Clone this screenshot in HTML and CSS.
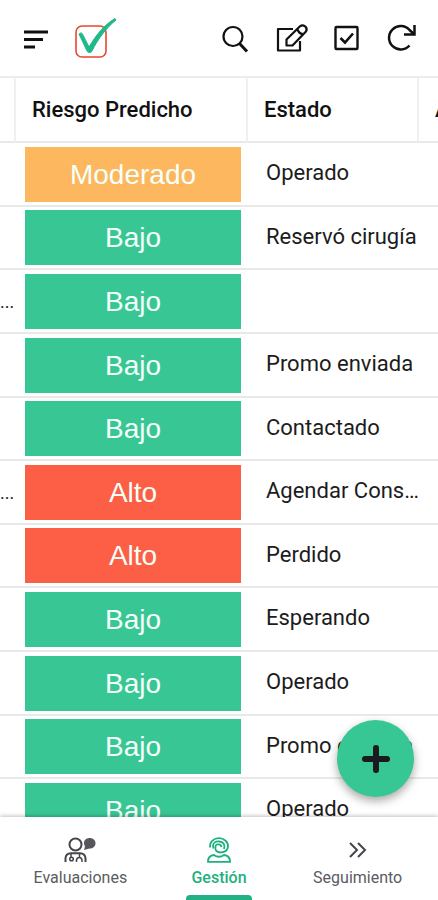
FILE: index.html
```html
<!DOCTYPE html>
<html lang="es">
  <head>
    <meta charset="UTF-8" />
    <meta name="viewport" content="width=device-width, initial-scale=1.0" />
    <title>Gestión</title>
    <link rel="stylesheet" href="styles.css">
  </head>
  <body>
    <header class="topbar">
      <button class="icon-button" aria-label="Menú">
        <svg viewBox="0 0 28 28" fill="none" stroke="#111" stroke-width="3">
          <path d="M2 8H26M2 15.500H21M2 23H13" />
        </svg>
      </button>
      <svg class="logo" viewBox="0 0 44 42" fill="none">
        <rect x="2" y="9" width="30" height="31" rx="6" stroke="#e5482f" stroke-width="1.600" />
        <path d="M5 17C7 15 8 16 9 18L15 30C22 18 30 8 41 1.500L42 3C32 11 24 22 18 34C17 36 14 36 13 34Z" fill="#1fb98a" stroke="#1fb98a" />
      </svg>
      <div class="actions">
        <button class="icon-button" aria-label="Buscar">
          <svg viewBox="0 0 28 28" fill="none" stroke="#111" stroke-width="2.200">
            <circle cx="12" cy="12.500" r="9.500" />
            <path d="M18.500 19.500L26 27.500" stroke-width="3" />
          </svg>
        </button>
        <button class="icon-button" aria-label="Editar">
          <svg viewBox="0 0 28 28" fill="none" stroke="#111" stroke-width="2.200" stroke-linejoin="round">
            <path d="M16 5H1V26.500H23V17" />
            <path d="M9.500 21.500V15.500L23 2.300Q25.500 .3 28 2.300L28.700 3Q30.600 5.500 28.700 7.800L15.500 21.500Z" />
            <path d="M20.500 5.500Q22 9.500 25.800 10.200" />
          </svg>
        </button>
        <button class="icon-button" aria-label="Seleccionar">
          <svg viewBox="0 0 28 28" fill="none" stroke="#111" stroke-width="2.400">
            <rect x="2.500" y="3" width="22" height="22" rx="1" />
            <path d="M7.500 14L12 18.500L20 9.500" stroke-width="2.600" />
          </svg>
        </button>
        <button class="icon-button" aria-label="Actualizar">
          <svg viewBox="0 0 28 28" fill="none" stroke="#111" stroke-width="2.500">
            <path d="M20.500 21.500A11.700 11.700 0 1 1 20.500 6L25 10" />
            <path d="M25.500 1V10.500H15" />
          </svg>
        </button>
      </div>
    </header>

    <main class="content">
      <table class="grid">
        <colgroup>
          <col class="col-name">
          <col class="col-risk">
          <col class="col-status">
          <col>
        </colgroup>
        <thead>
          <tr>
            <th></th>
            <th>Riesgo Predicho</th>
            <th>Estado</th>
            <th>A</th>
          </tr>
        </thead>
        <tbody>
          <tr><td></td><td><span class="tag medium">Moderado</span></td><td>Operado</td><td></td></tr>
          <tr><td></td><td><span class="tag low">Bajo</span></td><td>Reservó cirugía</td><td></td></tr>
          <tr><td>...</td><td><span class="tag low">Bajo</span></td><td></td><td></td></tr>
          <tr><td></td><td><span class="tag low">Bajo</span></td><td>Promo enviada</td><td></td></tr>
          <tr><td></td><td><span class="tag low">Bajo</span></td><td>Contactado</td><td></td></tr>
          <tr><td>...</td><td><span class="tag high">Alto</span></td><td>Agendar Consulta</td><td></td></tr>
          <tr><td></td><td><span class="tag high">Alto</span></td><td>Perdido</td><td></td></tr>
          <tr><td></td><td><span class="tag low">Bajo</span></td><td>Esperando</td><td></td></tr>
          <tr><td></td><td><span class="tag low">Bajo</span></td><td>Operado</td><td></td></tr>
          <tr><td></td><td><span class="tag low">Bajo</span></td><td>Promo enviada</td><td></td></tr>
          <tr><td></td><td><span class="tag low">Bajo</span></td><td>Operado</td><td></td></tr>
        </tbody>
      </table>
    </main>

    <button class="fab" aria-label="Agregar">
      <svg viewBox="0 0 28 28" stroke="#1a1a1f" stroke-width="6" stroke-linecap="round">
        <path d="M14 3V25M3 14H25" />
      </svg>
    </button>

    <nav class="tabs">
      <a class="tab" href="#evaluaciones">
        <svg viewBox="0 0 32 26" fill="none" stroke="#44464b" stroke-width="2">
          <circle cx="11.500" cy="7.500" r="6" />
          <path d="M1.500 25V21Q2 16.500 7 16.200H16Q21 16.500 21.500 21V25" />
          <path d="M7 17V20M15.500 17V20M12.500 25V23Q13 20.500 15.300 20.500Q17.500 20.500 18 23V25" stroke-width="1.500" />
          <circle cx="7.500" cy="22" r="1.800" stroke-width="1.500" />
          <path d="M25.500 1C29 1 31.500 3.200 31.500 6.200C31.500 9.300 29 11.500 25.500 11.500L20 13L21 9.500C18.500 5 21 1 25.500 1Z" fill="#55575c" stroke="none" />
        </svg>
        <span>Evaluaciones</span>
      </a>
      <a class="tab active" href="#gestion">
        <svg viewBox="0 0 32 26" fill="none" stroke="#1fb07f" stroke-width="1.800">
          <path d="M7 10.500C6.500 4.500 11 1.200 16 1.200S25.500 5 25 10Q24 15.500 17 15.500" />
          <path d="M10.500 11.500C8.500 5 14 4 16.500 4.500C20.500 5 22.500 8 21 12" />
          <path d="M12.500 9C13.500 6.500 18 7 18.500 10M12.500 9Q11.500 15 17 15.500" />
          <path d="M11 18Q5 18.500 5 24.800H27Q27 18.500 21 18Q16 21.500 11 18Z" />
        </svg>
        <span>Gestión</span>
      </a>
      <a class="tab" href="#seguimiento">
        <svg viewBox="0 0 32 26" fill="none" stroke="#44464b" stroke-width="2">
          <path d="M8 6L15 13L8 20M16 6L23 13L16 20" />
        </svg>
        <span>Seguimiento</span>
      </a>
    </nav>
  </body>
</html>
```

FILE: styles.css
```css
* {
  box-sizing: border-box;
}

body {
  margin: 0;
  height: 100vh;
  display: flex;
  flex-direction: column;
  overflow: hidden;
  background-color: #fff;
  color: #1c1c1c;
  font-family: Roboto, "Liberation Sans", sans-serif;
}

button {
  padding: 0;
  border: none;
  background: none;
  cursor: pointer;
}

svg {
  display: block;
  overflow: visible;
}

.topbar {
  display: flex;
  align-items: center;
  flex: none;
  height: 78px;
  padding: 0 21px 0 22px;
  border-bottom: 2px solid #ececec;
}

.icon-button svg {
  width: 28px;
  height: 28px;
}

.logo {
  width: 44px;
  height: 42px;
  margin-left: 24px;
}

.actions {
  display: flex;
  gap: 28px;
  margin-left: auto;
}

.content {
  flex: 1;
  min-height: 0;
  overflow: hidden;
}

.grid {
  width: 100%;
  table-layout: fixed;
  border-collapse: separate;
  border-spacing: 0;
}

.col-name {
  width: 16px;
}

.col-risk {
  width: 232px;
}

.col-status {
  width: 171px;
}

.grid th,
.grid td {
  overflow: hidden;
  white-space: nowrap;
  text-align: left;
  text-overflow: ellipsis;
  border-bottom: 2px solid #e8eaea;
}

.grid th {
  height: 65px;
  padding: 0 0 0 16px;
  border-right: 2px solid #f0f0f0;
  color: #111;
  font-size: 22px;
  font-weight: 500;
  text-overflow: clip;
}

.grid th:last-child {
  border-right: none;
}

.grid td {
  height: 64px;
  padding: 0 0 3px 18px;
  font-size: 22px;
}

/* keeps the row rhythm slightly under 64px */
.grid tr:nth-child(5n + 2) td,
.grid tr:nth-child(5n) td {
  height: 63px;
}

.grid th:first-child,
.grid td:first-child {
  padding: 0;
  text-overflow: clip;
}

.grid td:first-child {
  font-size: 18px;
}

.grid td:nth-child(2) {
  padding: 0 7px 0 9px;
}

.tag {
  display: block;
  height: 55px;
  line-height: 55px;
  color: #f4fffa;
  font-family: "Liberation Sans", Arial, sans-serif;
  font-size: 28px;
  text-align: center;
}

.low {
  background-color: #39c695;
}

.medium {
  background-color: #fdb75f;
}

.high {
  background-color: #fc5f45;
}

.fab {
  position: absolute;
  right: 24px;
  bottom: 103px;
  display: flex;
  align-items: center;
  justify-content: center;
  width: 77px;
  height: 77px;
  border-radius: 50%;
  background-color: #37c794;
  box-shadow: 0 4px 10px rgba(0, 0, 0, 0.35);
}

.fab svg {
  width: 28px;
  height: 28px;
}

.tabs {
  position: relative;
  display: flex;
  flex: none;
  height: 83px;
  padding: 0 11px;
  background-color: #fff;
  box-shadow: 0 -1px 4px rgba(0, 0, 0, 0.25);
}

.tab {
  display: flex;
  flex: 1;
  flex-direction: column;
  align-items: center;
  gap: 5px;
  padding-top: 20px;
  color: #5a5c60;
  font-size: 16px;
  line-height: 20px;
  text-decoration: none;
}

.tab svg {
  width: 32px;
  height: 26px;
}

.active {
  color: #1fb07f;
  font-weight: 500;
}

.active::after {
  content: "";
  width: 66px;
  height: 5px;
  margin-top: auto;
  border-radius: 4px 4px 0 0;
  background-color: #22b184;
}
```
